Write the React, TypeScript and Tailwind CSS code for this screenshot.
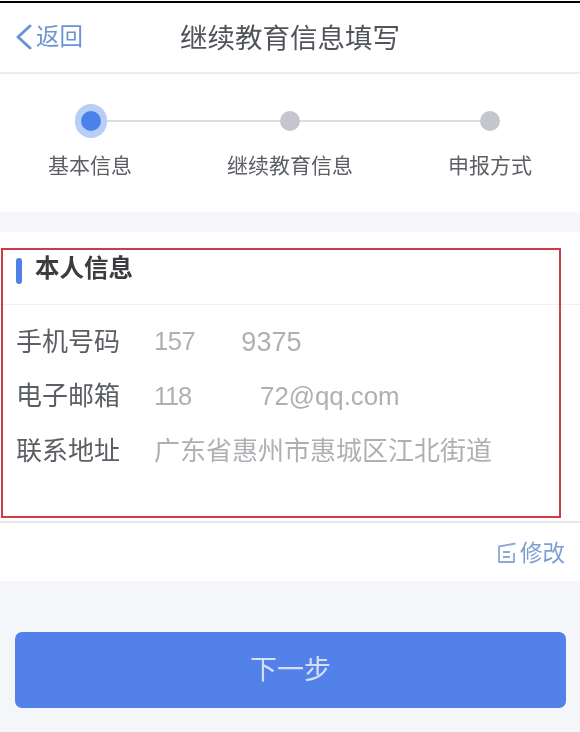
const fontStack = "font-['Liberation_Sans','Noto_Sans_CJK_SC',sans-serif]"

const steps = ["基本信息", "继续教育信息", "申报方式"]

function InfoRow({ label, children }: { label: string; children: React.ReactNode }) {
  return (
    <div className="flex h-[54.5px] items-center">
      <div className="w-[138px] shrink-0 text-[26px] text-[#5b5e63]">{label}</div>
      <div className="flex text-[25.5px] text-[#aeb0b4]">{children}</div>
    </div>
  )
}

export default function App() {
  return (
    <div className={`relative h-[732px] w-[580px] overflow-hidden bg-[#f4f6fa] blur-[0.4px] ${fontStack}`}>
      {/* black strip along the top of the capture */}
      <div className="h-[3px] border-b-2 border-black bg-white" />

      {/* Header */}
      <div className="relative flex h-[71px] items-center justify-center border-b-2 border-[#ececee] bg-white pt-[2px]">
        <div className="absolute left-[15px] top-[19px] flex items-center gap-[3px] text-[#6b93d6]">
          <svg width="18" height="26" viewBox="0 0 18 26" fill="none">
            <path d="M15 2 L3 13 L15 24" stroke="#6b93d6" strokeWidth="3" strokeLinecap="round" strokeLinejoin="round" />
          </svg>
          <span className="text-[23.5px] leading-[30px]">返回</span>
        </div>
        <h1 className="text-[27.5px] font-normal text-[#505358]">继续教育信息填写</h1>
      </div>

      {/* Steps */}
      <div className="h-[138px] bg-white pt-[30px]">
        <div className="flex items-center pl-[75px]">
          <div className="flex h-[34px] w-[32px] items-center justify-center rounded-full bg-[#b7cff5]">
            <div className="h-[20px] w-[20px] rounded-full bg-[#4b82ea]" />
          </div>
          <div className="h-[2px] w-[173px] bg-[#dcdce0]" />
          <div className="h-[20px] w-[20px] rounded-full bg-[#c5c5ce]" />
          <div className="h-[2px] w-[180px] bg-[#dcdce0]" />
          <div className="h-[20px] w-[20px] rounded-full bg-[#c5c5ce]" />
        </div>
        <div className="mt-[13px] flex justify-between px-[20px]">
          {steps.map((step) => (
            <div key={step} className="w-[140px] text-center text-[21px] leading-[30px] text-[#5b5e63]">
              {step}
            </div>
          ))}
        </div>
      </div>

      <div className="h-[20px]" />

      {/* Personal info */}
      <div className="bg-white">
        <div className="flex h-[73px] items-start border-b border-[#f0f0f2] pl-[16px] pt-[20px]">
          <div className="mt-[6px] h-[26px] w-[6px] rounded-full bg-[#4f80e6]" />
          <div className="ml-[13px] text-[24.5px] font-semibold leading-[34px] text-[#3a3c40]">本人信息</div>
        </div>
        <div className="h-[218px] border-b-2 border-[#e6e6e8] pl-[16px] pt-[10px]">
          <InfoRow label="手机号码">
            <span className="tracking-[-0.4px]">157</span>
            <span className="ml-[46px] text-[27px]">9375</span>
          </InfoRow>
          <InfoRow label="电子邮箱">
            <span className="tracking-[-1.2px]">118</span>
            <span className="ml-[69px] text-[25.8px]">72@qq.com</span>
          </InfoRow>
          <InfoRow label="联系地址">
            <span className="text-[26px]">广东省惠州市惠城区江北街道</span>
          </InfoRow>
        </div>
        <div className="flex h-[58px] items-center justify-end gap-[3px] pr-[15px] pt-[3px] text-[#7d9fd4]">
          <svg width="20" height="22" viewBox="0 0 20 22" fill="none" className="-mt-[2px]">
            <path d="M18.5 1.5 L2 4.5 V20 H17 V11" stroke="#8aa8d8" strokeWidth="1.8" strokeLinejoin="round" />
            <path d="M6 10 H13 M6 15 H13" stroke="#8aa8d8" strokeWidth="1.8" />
          </svg>
          <span className="text-[22.5px] leading-[30px]">修改</span>
        </div>
      </div>

      {/* Next button */}
      <div className="px-[15px] pt-[51px]">
        <button className="flex h-[76px] w-[551px] items-center justify-center rounded-[7px] bg-[#5281e9] pt-[1px] text-[27px] text-[#d5e0f7]">
          下一步
        </button>
      </div>

      {/* Red annotation box drawn over the screenshot */}
      <div className="absolute left-[1px] top-[248px] h-[270px] w-[560px] border-2 border-[#cf3a44]" />
    </div>
  )
}
